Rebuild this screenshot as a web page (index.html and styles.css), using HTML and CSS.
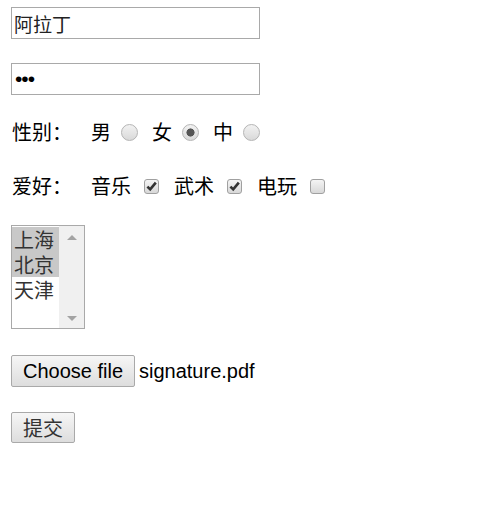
FILE: index.html
```html
<!DOCTYPE html>
<html lang="zh-CN">
<head>
    <meta charset="UTF-8">
    <title>表单</title>
    <link rel="stylesheet" href="styles.css">
</head>
<body>
    <form class="form">
        <div class="row">
            <input type="text" class="text-input" value="阿拉丁">
        </div>

        <div class="row pwd-row">
            <input type="password" class="text-input pwd" value="abc">
        </div>

        <div class="row choice-row">
            <span class="label">性别：</span>
            <span class="opt">男</span><input type="radio" name="sex" class="radio">
            <span class="opt">女</span><input type="radio" name="sex" class="radio" checked>
            <span class="opt">中</span><input type="radio" name="sex" class="radio">
        </div>

        <div class="row choice-row">
            <span class="label">爱好：</span>
            <span class="opt">音乐</span><input type="checkbox" class="check" checked>
            <span class="opt">武术</span><input type="checkbox" class="check" checked>
            <span class="opt">电玩</span><input type="checkbox" class="check">
        </div>

        <div class="row">
            <!-- 多选列表 -->
            <div class="listbox">
                <div class="list-items">
                    <div class="list-item selected">上海</div>
                    <div class="list-item selected">北京</div>
                    <div class="list-item">天津</div>
                </div>
                <div class="list-scroll">
                    <span class="arrow up"></span>
                    <span class="arrow down"></span>
                </div>
            </div>
        </div>

        <div class="row file-row">
            <button type="button" class="btn file-btn">Choose file</button>
            <span class="file-name">signature.pdf</span>
        </div>

        <div class="row">
            <button type="submit" class="btn submit-btn">提交</button>
        </div>
    </form>
</body>
</html>
```

FILE: styles.css
```css
* {
    margin: 0;
    padding: 0;
    box-sizing: border-box;
}

body {
    background: #fff;
    color: #000;
    font-family: "Noto Sans CJK SC", "Liberation Sans", sans-serif;
    font-size: 20px;
    padding: 7px 0 0 11px;
}

.form {
    display: flex;
    flex-direction: column;
    align-items: flex-start;
}

.row {
    margin-bottom: 24px;
}

.pwd-row {
    margin-bottom: 23px;
}

.text-input {
    display: block;
    width: 249px;
    height: 32px;
    border: 1px solid #a9a9a9;
    padding: 0 2px;
    font-family: "Noto Sans CJK SC", sans-serif;
    font-size: 19px;
    color: #222;
    outline: none;
}

.text-input.pwd {
    font-family: "Liberation Sans", sans-serif;
    font-size: 21px;
    letter-spacing: -1px;
    padding-left: 3px;
    color: #000;
}

.choice-row {
    display: flex;
    align-items: center;
    height: 28px;
    line-height: 28px;
    margin-bottom: 26px;
}

.label {
    padding-left: 1px;
    width: 80px;
}

.opt {
    margin-right: 10px;
}

.radio {
    appearance: none;
    width: 17px;
    height: 17px;
    border-radius: 50%;
    border: 1px solid #b4b4b4;
    background: linear-gradient(#f2f2f2, #d9d9d9);
    margin-right: 14px;
}

.radio:checked {
    background: radial-gradient(circle, #555 0 3.8px, transparent 4.3px), linear-gradient(#f2f2f2, #d9d9d9);
}

.check {
    appearance: none;
    width: 15px;
    height: 15px;
    border: 1px solid #a0a0a0;
    border-radius: 3px;
    background: linear-gradient(#f4f4f4, #d8d8d8);
    margin: 0 15px 0 3px;
}

.check:checked {
    background-image: url("data:image/svg+xml,%3Csvg xmlns='http://www.w3.org/2000/svg' viewBox='0 0 13 13'%3E%3Cpath d='M2.4 6.6 L5.2 9.4 L10.8 2.6' fill='none' stroke='%23333' stroke-width='2.6'/%3E%3C/svg%3E"), linear-gradient(#f4f4f4, #d8d8d8);
    background-size: 13px 13px, auto;
    background-repeat: no-repeat;
}

.listbox {
    display: flex;
    width: 74px;
    height: 104px;
    border: 1px solid #a9a9a9;
    margin-top: -1px;
}

.list-items {
    width: 47px;
    padding-top: 1px;
}

.list-item {
    height: 25px;
    line-height: 25px;
    padding-left: 2px;
    color: #333;
}

.list-item.selected {
    background: #c8c8c8;
}

.list-scroll {
    flex: 1;
    background: #f0f0f0;
    display: flex;
    flex-direction: column;
    justify-content: space-between;
    align-items: center;
    padding: 9px 0 7px;
}

.arrow {
    width: 0;
    height: 0;
    border-left: 5px solid transparent;
    border-right: 5px solid transparent;
}

.arrow.up {
    border-bottom: 5px solid #a3a3a3;
}

.arrow.down {
    border-top: 5px solid #a3a3a3;
}

.file-row {
    display: flex;
    align-items: center;
    margin-top: 2px;
}

.btn {
    display: block;
    border: 1px solid #a9a9a9;
    border-radius: 2px;
    background: linear-gradient(#f6f6f6, #dddddd);
    color: #000;
    font-size: 20px;
}

.file-btn {
    width: 124px;
    height: 32px;
    font-family: "Liberation Sans", Arial, sans-serif;
}

.file-name {
    margin-left: 4px;
    font-family: "Liberation Sans", Arial, sans-serif;
}

.submit-btn {
    width: 64px;
    height: 31px;
    margin-top: 1px;
    font-family: "Noto Sans CJK SC", sans-serif;
    color: #333;
}
```
